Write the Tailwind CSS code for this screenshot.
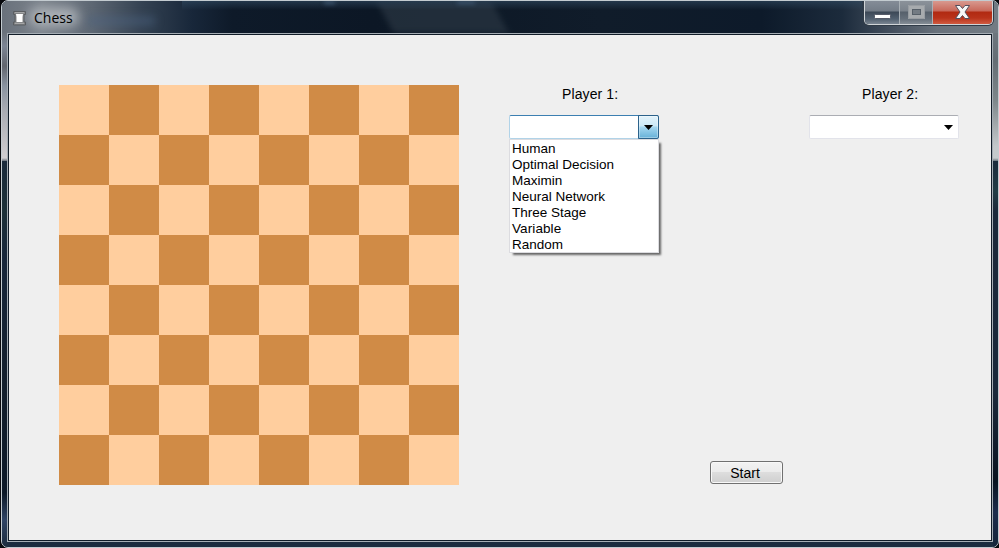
<!DOCTYPE html>
<html lang="en">
<head>
<meta charset="utf-8">
<title>Chess</title>
<script src="https://cdn.jsdelivr.net/npm/@tailwindcss/browser@4"></script>
</head>
<body class="w-[999px] h-[548px] overflow-hidden bg-[#08090d] pl-px font-['Liberation_Sans',Arial,sans-serif] text-[14px] text-black">
<div class="relative w-[998px] h-[548px] flex flex-col overflow-hidden rounded-[7px] border border-[#c3cbd0] bg-[#1c2c3f]">
  <!-- Glass frame -->
  <div class="absolute left-0 top-0 w-[6px] h-[160px] bg-[linear-gradient(180deg,#737981_0px,#697078_30px,#7c8594_45px,#62666e_65px,#8993a0_85px,#a9acb3_110px,#cfcdd0_157px,#68707a_160px)]"></div>
  <div class="absolute left-0 top-[160px] w-[6px] bottom-0 bg-[linear-gradient(180deg,#1b2b3c,#1c3038_13%,#17263a_25%,#14202e_55%,#0c1827_86%,#304465_93%,#1c2c3e)]"></div>
  <div class="absolute right-0 top-0 w-[5px] h-[160px] bg-[linear-gradient(180deg,#78828a_0px,#646d74_60px,#7e878b_100px,#c3c7ca_145px,#c6cacc_157px,#68737c_160px)]"></div>
  <div class="absolute right-0 top-[160px] w-[5px] bottom-0 bg-[linear-gradient(180deg,#1b2a3b,#213c45_8%,#1b293a_13%,#1a293b_60%,#071320_83%,#1d2d4d_91%,#152539)]"></div>

  <header class="relative h-[32px] shrink-0 flex items-start justify-between bg-[linear-gradient(90deg,#69717b_0px,#7b828b_40px,#5d6773_90px,#344252_140px,#18273a_190px,#0e1a29_230px,#0c1725_370px,#101c2a_600px,#0d1a2a_760px,#1c2b3c_840px,#3c4857_880px,#68717b_935px,#737c84_996px)]">
    <div class="absolute left-[383px] top-0 w-[115px] h-[32px] skew-x-[28deg] bg-[#26323f]/80 blur-[3px]"></div>
    <div class="absolute left-[85px] top-[16px] w-[68px] h-[8px] bg-[#4c6383]/50 blur-[4px]"></div>
    <div class="absolute left-[180px] top-0 w-[680px] h-[9px] bg-linear-to-b from-[#314a61]/60 to-transparent"></div>
    <div class="absolute left-[322px] top-0 w-[11px] h-[3px] bg-[#4a6582]/80 blur-[2px]"></div>
    <div class="absolute left-[455px] top-0 w-[18px] h-[3px] bg-[#4a6582]/70 blur-[2px]"></div>
    <div class="absolute left-[27px] top-[7px] w-[50px] h-[18px] rounded-full bg-[#b9bdc2]/85 blur-[6px]"></div>
    <div class="relative flex items-center h-[34px] pl-[11px] gap-[8px]">
      <svg width="13" height="15" viewBox="0 0 13 15">
        <path d="M.5 .5h12v3H11v7.500h1.500v3H.5v-3H2V3.500H.5z" fill="#858789" stroke="#5b5e62"/>
        <path d="M2 1.500h9M2 12.500h9" stroke="#a5a6a7"/>
        <path d="M3 3h7L9.500 6v5h-6V6z" fill="#fff"/>
      </svg>
      <span class="font-['Open_Sans','Noto_Sans',sans-serif] text-[14px] leading-[20px]">Chess</span>
    </div>
    <div class="relative flex h-[24px] w-[129px] mr-[5px] rounded-b-[5px] border border-t-0 border-[#d0d4d7] shadow-[0_0_0_1px_#303b47] overflow-hidden">
      <div class="w-[35px] flex justify-center border-r border-[#a8afb5] bg-[linear-gradient(180deg,#848c97_0px,#737c87_10px,#3c4856_11px,#526070_18px,#7a8591_23px)]">
        <svg width="17" height="23" viewBox="0 0 17 23"><rect x=".5" y="13.500" width="16" height="4" rx=".8" fill="#fff" stroke="#555a68"/></svg>
      </div>
      <div class="w-[33px] flex justify-center border-r border-[#a8afb5] bg-[linear-gradient(180deg,#8b929a_0px,#7a828b_10px,#56606b_11px,#66707b_18px,#858d95_23px)]">
        <svg width="18" height="23" viewBox="0 0 18 23"><path d="M1 4h17v14H1zM5 8v6h9V8z" fill="#a7abae" fill-rule="evenodd"/><rect x="5.500" y="8.500" width="8" height="5" fill="#737b83" stroke="#565f68"/><path d="M1.500 4.500h16v13h-16z" fill="none" stroke="#989da2"/></svg>
      </div>
      <div class="flex-1 flex justify-center bg-[linear-gradient(180deg,#d8998f_0px,#c8685a_10px,#b12a12_11px,#b9331b_17px,#d05a40_23px)]">
        <svg width="17" height="23" viewBox="0 0 17 23"><path d="M1.500 4.500H6L8.500 7.500 11 4.500h4.500L11 11l4.500 6.500H11l-2.500-3-2.500 3H1.500L6 11z" fill="#f7f7f7" stroke="#534f5d" stroke-linejoin="round"/></svg>
      </div>
    </div>
  </header>

  <main class="relative ml-[5px] w-[986px] h-[509px] border border-[#a5adb4] bg-[#111c28] p-px">
    <div class="w-[982px] h-[505px] bg-[#efefef] flex pl-[50px] pt-[50px]">
      <div class="size-[400px] bg-[repeating-conic-gradient(#d08b46_0deg_90deg,#ffce9e_90deg_180deg)] bg-[length:100px_100px]"></div>
      <div class="ml-[50px] w-[450px] h-[400px] flex flex-col">
        <div class="flex justify-between">
          <section class="relative w-[150px]">
            <h2 class="h-[30px] pl-[53px] pt-[1px] leading-[16px] tracking-[0.1px] whitespace-nowrap">Player 1:</h2>
            <div class="flex h-[24px] border border-t-[#3c7fb1] border-[#b1d3e8] rounded-[2px] bg-white">
              <div class="flex-1"></div>
              <div class="-my-px -mr-px w-[21px] h-[24px] border border-[#2c628b] rounded-r-[2px] bg-[linear-gradient(180deg,#e3f3fb_0%,#cce9f7_45%,#a5d7f0_50%,#67b1d8_100%)] shadow-[inset_0_0_0_1px_#ffffff55] flex items-center justify-center">
                <svg width="9" height="5" viewBox="0 0 9 5"><path d="M0 0h9L4.500 5z"/></svg>
              </div>
            </div>
            <ul class="absolute left-0 top-[54px] w-[150px] h-[114px] border border-[#dcdce0] bg-white pl-[2px] pt-px text-[13.500px] leading-[16px] shadow-[3px_3px_2px_-1px_#666] whitespace-nowrap">
              <li>Human</li><li>Optimal Decision</li><li>Maximin</li><li>Neural Network</li><li>Three Stage</li><li class="tracking-[0.1px]">Variable</li><li>Random</li>
            </ul>
          </section>
          <section class="w-[150px]">
            <h2 class="h-[30px] pl-[53px] pt-[1px] leading-[16px] tracking-[0.1px] whitespace-nowrap">Player 2:</h2>
            <div class="flex items-center justify-end h-[24px] pr-[5px] border border-t-[#abadb3] border-[#e2e3ea] rounded-[2px] bg-white">
              <svg width="9" height="5" viewBox="0 0 9 5"><path d="M0 0h9L4.500 5z"/></svg>
            </div>
          </section>
        </div>
        <button class="mt-auto mb-[1px] ml-[201px] w-[73px] h-[23px] pr-[3px] pt-[1px] leading-[20px] rounded-[3px] border border-[#707070] bg-[linear-gradient(180deg,#f2f2f2_0%,#ebebeb_48%,#dddddd_50%,#cfcfcf_100%)] shadow-[inset_0_0_0_1px_#f8f8f8]">Start</button>
      </div>
    </div>
  </main>
</div>
</body>
</html>
